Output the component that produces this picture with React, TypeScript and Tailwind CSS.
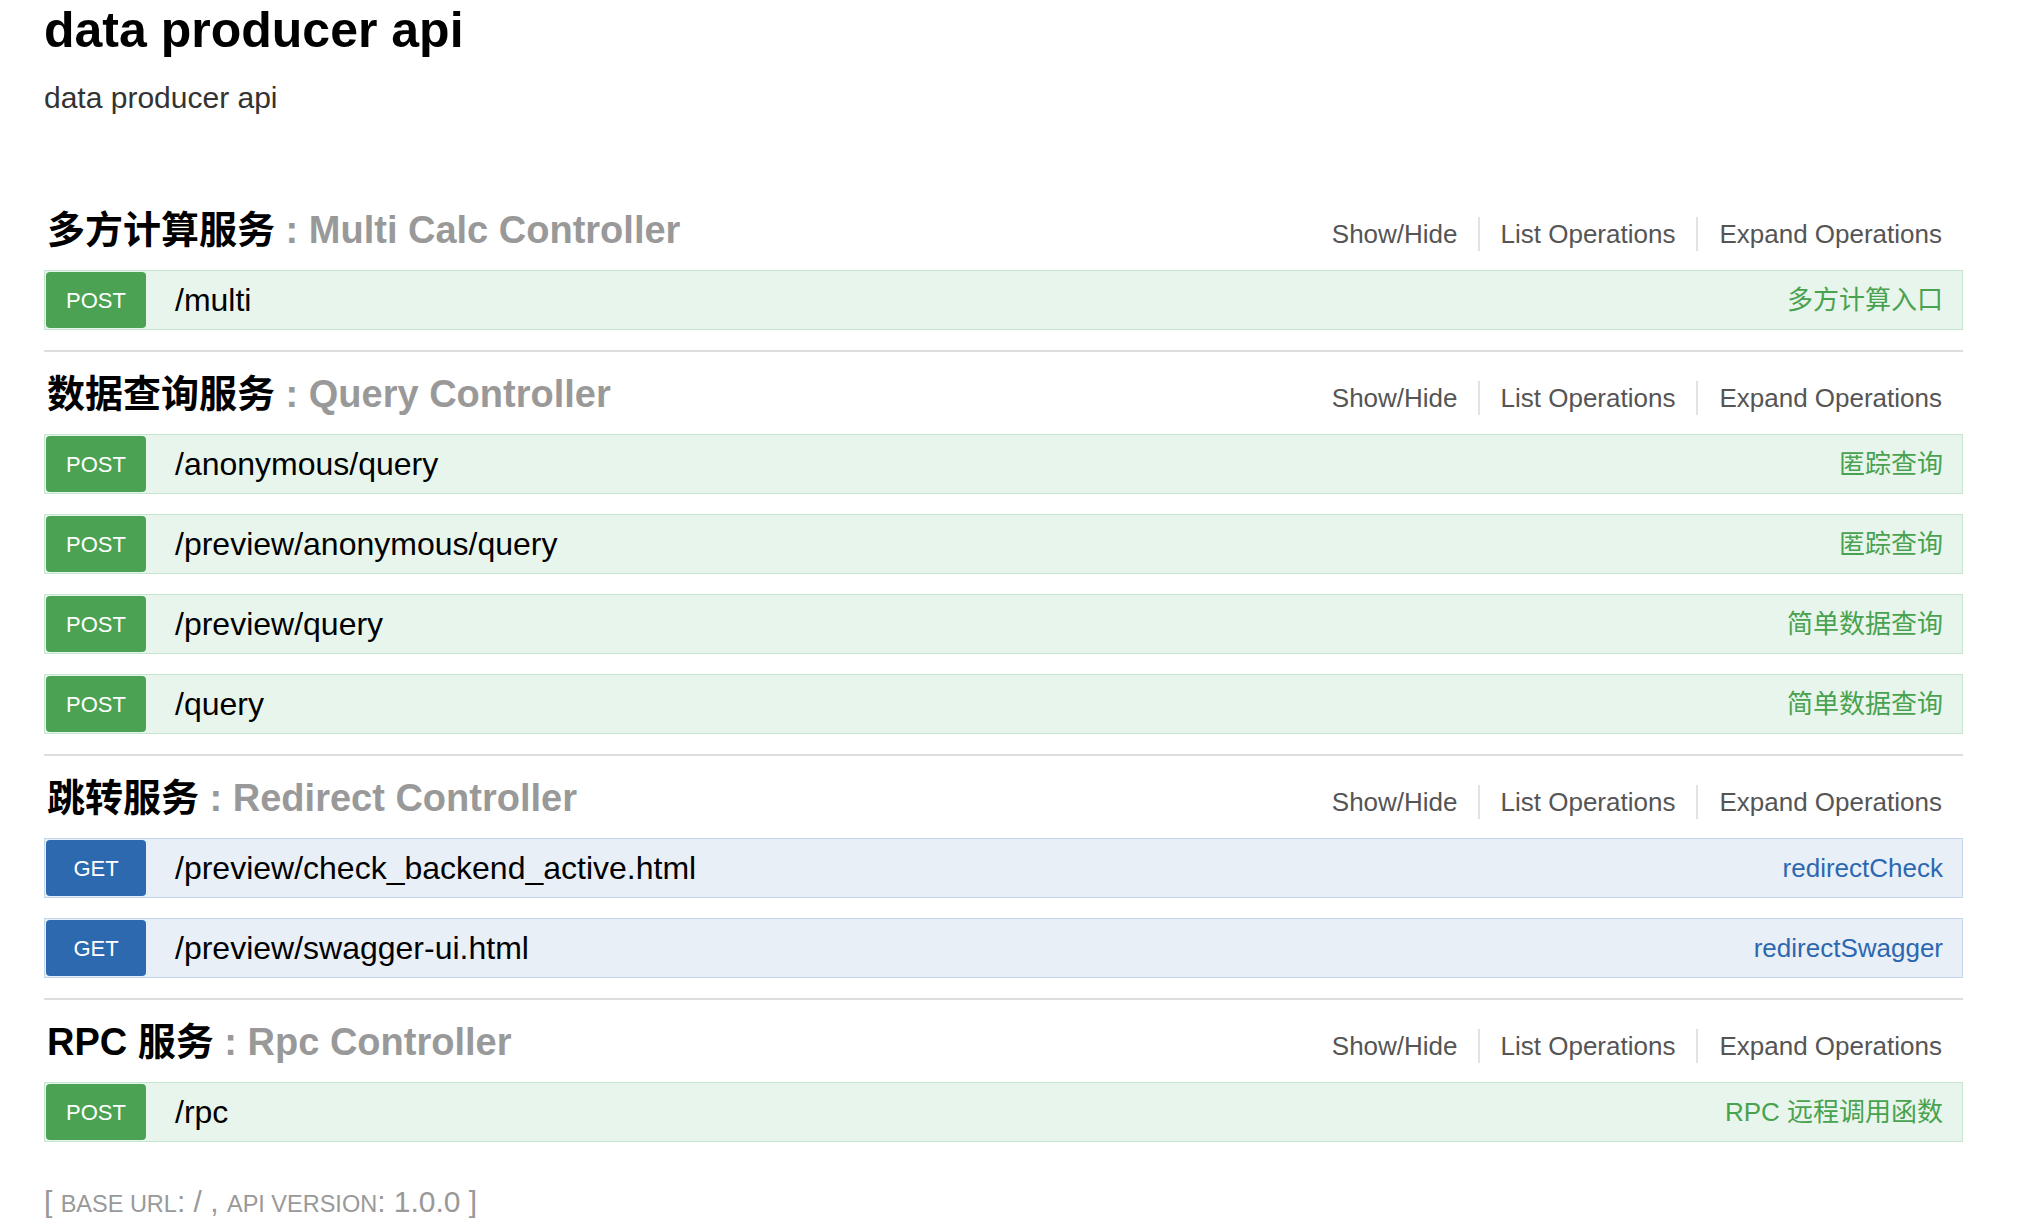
type Method = 'POST' | 'GET';

interface Operation {
  method: Method;
  path: string;
  summary: string;
}

interface Resource {
  name: string;
  controller: string;
  ops: Operation[];
}

const resources: Resource[] = [
  {
    name: '多方计算服务',
    controller: 'Multi Calc Controller',
    ops: [{ method: 'POST', path: '/multi', summary: '多方计算入口' }],
  },
  {
    name: '数据查询服务',
    controller: 'Query Controller',
    ops: [
      { method: 'POST', path: '/anonymous/query', summary: '匿踪查询' },
      { method: 'POST', path: '/preview/anonymous/query', summary: '匿踪查询' },
      { method: 'POST', path: '/preview/query', summary: '简单数据查询' },
      { method: 'POST', path: '/query', summary: '简单数据查询' },
    ],
  },
  {
    name: '跳转服务',
    controller: 'Redirect Controller',
    ops: [
      { method: 'GET', path: '/preview/check_backend_active.html', summary: 'redirectCheck' },
      { method: 'GET', path: '/preview/swagger-ui.html', summary: 'redirectSwagger' },
    ],
  },
  {
    name: 'RPC 服务',
    controller: 'Rpc Controller',
    ops: [{ method: 'POST', path: '/rpc', summary: 'RPC 远程调用函数' }],
  },
];

function OperationRow({ op }: { op: Operation }) {
  const post = op.method === 'POST';
  return (
    <li
      className={`flex items-center h-[60px] p-px border mb-[20px] ${
        post ? 'bg-[#e8f5ec] border-[#c6e6cf]' : 'bg-[#e8eff7] border-[#c4d6eb]'
      }`}
    >
      <span
        className={`w-[100px] h-[56px] rounded-[4px] flex items-center justify-center text-white text-[22px] ${
          post ? 'bg-[#4aa252]' : 'bg-[#2d69ae]'
        }`}
      >
        {op.method}
      </span>
      <span className="ml-[29px] text-[32px] text-black">{op.path}</span>
      <span className={`ml-auto pr-[18px] text-[26px] ${post ? 'text-[#48a24f]' : 'text-[#2c67b0]'}`}>
        {op.summary}
      </span>
    </li>
  );
}

function ResourceBlock({ res, last }: { res: Resource; last: boolean }) {
  return (
    <li className={`${last ? '' : 'border-b-2 border-[#dddddd]'}`}>
      <div className="flex items-baseline justify-between h-[48px] mb-[16px]">
        <h2 className="pl-[3px] text-[38px] leading-[48px] font-bold">
          <span className="text-black">{res.name}</span>
          <span className="text-[#999999]"> : {res.controller}</span>
        </h2>
        <ul className="flex items-baseline text-[26px] leading-[34px] text-[#555555]">
          <li className="pl-[23px] pr-[20px]">Show/Hide</li>
          <li className="pl-[21px] pr-[21px] border-l-2 border-[#e2e2e2]">List Operations</li>
          <li className="px-[21px] border-l-2 border-[#e2e2e2]">Expand Operations</li>
        </ul>
      </div>
      <ul>
        {res.ops.map((op) => (
          <OperationRow key={op.path} op={op} />
        ))}
      </ul>
    </li>
  );
}

export default function App() {
  return (
    <div className="min-h-screen bg-white font-['Liberation_Sans','Noto_Sans_CJK_SC',sans-serif]">
      <div className="ml-[44px] w-[1919px]">
        <h1 className="text-[50px] leading-[60px] font-bold text-black">data producer api</h1>
        <p className="mt-[18px] text-[30px] leading-[40px] text-[#333333]">data producer api</p>
        <ul className="mt-[88px] flex flex-col gap-[18px]">
          {resources.map((res, i) => (
            <ResourceBlock key={res.controller} res={res} last={i === resources.length - 1} />
          ))}
        </ul>
        <div className="mt-[20px] text-[30px] leading-[40px] text-[#999999]">
          [ <span className="uppercase text-[23.5px]">base url</span>: / ,{' '}
          <span className="uppercase text-[23.5px]">api version</span>: 1.0.0 ]
        </div>
      </div>
    </div>
  );
}
